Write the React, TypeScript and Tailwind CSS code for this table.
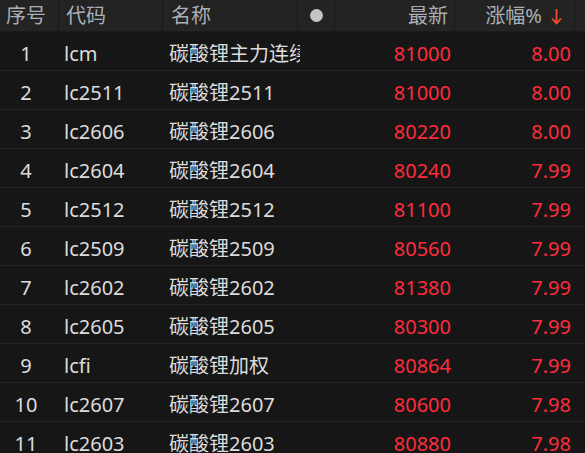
import React from 'react'

const ROWS = [
  { code: 'lcm', name: '碳酸锂主力连续', last: '81000', pct: '8.00' },
  { code: 'lc2511', name: '碳酸锂2511', last: '81000', pct: '8.00' },
  { code: 'lc2606', name: '碳酸锂2606', last: '80220', pct: '8.00' },
  { code: 'lc2604', name: '碳酸锂2604', last: '80240', pct: '7.99' },
  { code: 'lc2512', name: '碳酸锂2512', last: '81100', pct: '7.99' },
  { code: 'lc2509', name: '碳酸锂2509', last: '80560', pct: '7.99' },
  { code: 'lc2602', name: '碳酸锂2602', last: '81380', pct: '7.99' },
  { code: 'lc2605', name: '碳酸锂2605', last: '80300', pct: '7.99' },
  { code: 'lcfi', name: '碳酸锂加权', last: '80864', pct: '7.99' },
  { code: 'lc2607', name: '碳酸锂2607', last: '80600', pct: '7.98' },
  { code: 'lc2603', name: '碳酸锂2603', last: '80880', pct: '7.98' },
]

export default function App() {
  return (
    <div
      className="w-[585px] h-[453px] overflow-hidden bg-[#161616] text-[20px] leading-none"
      style={{ fontFamily: '"Noto Sans", "Noto Sans CJK SC", sans-serif' }}
    >
      {/* 表头 */}
      <div className="flex h-[32px] bg-[#232323] text-[#a9afb5] border-b border-[#1b1b1b]">
        <div className="w-[59px] flex items-center pl-[6px] pt-[1px] border-r border-[#181818]">序号</div>
        <div className="w-[104px] flex items-center pl-[7px] pt-[1px] border-r border-[#181818]">代码</div>
        <div className="w-[135px] flex items-center pl-[8px] pt-[1px] border-r border-[#181818]">名称</div>
        <div className="w-[37px] flex items-center justify-center border-r border-[#181818]">
          <span className="w-[13px] h-[13px] rounded-full bg-[#c4c4c4]" />
        </div>
        <div className="w-[120px] flex items-center justify-end pr-[6px] pt-[1px] border-r border-[#181818]">最新</div>
        <div className="w-[120px] flex items-center justify-end pr-[12px] pt-[1px] border-r border-[#181818]">
          <span>涨幅%</span>
          <svg width="11" height="17" viewBox="0 0 11 17" className="ml-[9px]">
            <path d="M5.5 1 V15 M1 10.5 L5.5 15.5 L10 10.5" fill="none" stroke="#f0502d" strokeWidth="1.8" />
          </svg>
        </div>
        <div className="flex-1" />
      </div>

      {/* 行 */}
      {ROWS.map((r, i) => (
        <div key={r.code} className="flex h-[39px] items-center pt-[6px] border-b border-[#252525]">
          <div className="w-[59px] pr-[7px] text-center text-[#dcdcdc]">{i + 1}</div>
          <div className="w-[104px] pl-[5px] text-[#dcdcdc]">{r.code}</div>
          <div className="w-[137px] pl-[6px] text-[#dcdcdc] whitespace-nowrap overflow-hidden">{r.name}</div>
          <div className="w-[35px]" />
          <div className="w-[120px] pr-[4px] text-right text-[#ff2b3b]">{r.last}</div>
          <div className="w-[120px] pr-[4px] text-right text-[#ff2b3b]">{r.pct}</div>
        </div>
      ))}
    </div>
  )
}
